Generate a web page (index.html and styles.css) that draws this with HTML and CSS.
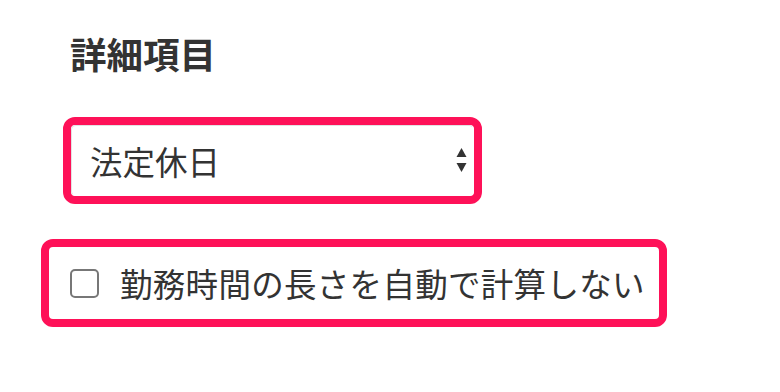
FILE: index.html
```html
<!DOCTYPE html>
<html lang="ja">
<head>
<meta charset="utf-8">
<link rel="stylesheet" href="styles.css">
</head>
<body>
<div class="page">
  <h2 class="heading">詳細項目</h2>
  <div class="highlight select-hl">
    <div class="select">
      <span class="select-text">法定休日</span>
      <svg class="arrows" width="11" height="25" viewBox="0 0 11 25">
        <polygon points="5.5,0 10.5,9 0.5,9" fill="#333"/>
        <polygon points="0.5,15 10.5,15 5.5,24" fill="#333"/>
      </svg>
    </div>
  </div>
  <label class="highlight check-hl">
    <span class="checkbox"></span>
    <span class="check-text">勤務時間の長さを自動で計算しない</span>
  </label>
</div>
</body>
</html>
```
FILE: styles.css
```css
html, body {
  margin: 0;
  padding: 0;
  background: #fff;
}
.page {
  display: flex;
  flex-direction: column;
  align-items: flex-start;
  font-family: "Noto Sans CJK JP", "Noto Sans", sans-serif;
  color: #333;
}
.heading {
  margin: 36px 0 0 70px;
  font-size: 36.5px;
  line-height: 36px;
  font-weight: bold;
  color: #333;
}
.highlight {
  box-sizing: border-box;
  border: 8px solid #fe1158;
  border-radius: 12px;
  background: #fff;
}
.select-hl {
  margin: 45px 0 0 63px;
  width: 419px;
  height: 87px;
}
.select {
  box-sizing: border-box;
  height: 100%;
  border: 1px solid #e2e2e2;
  border-right-color: #fff;
  border-bottom-color: #fff;
  border-radius: 5px;
  display: flex;
  align-items: center;
  justify-content: space-between;
  padding: 0 6px 0 18px;
}
.select-text {
  font-size: 32.5px;
  line-height: 40px;
}
.arrows {
  display: block;
}
.check-hl {
  margin: 35px 0 0 41px;
  width: 626px;
  height: 88px;
  display: flex;
  align-items: center;
  padding-left: 21px;
  gap: 21px;
}
.checkbox {
  box-sizing: border-box;
  width: 29px;
  height: 29px;
  border: 2px solid #777;
  border-radius: 5px;
  flex: none;
}
.check-text {
  font-size: 32.5px;
  line-height: 40px;
  letter-spacing: 0.3px;
  color: #333;
}
```
